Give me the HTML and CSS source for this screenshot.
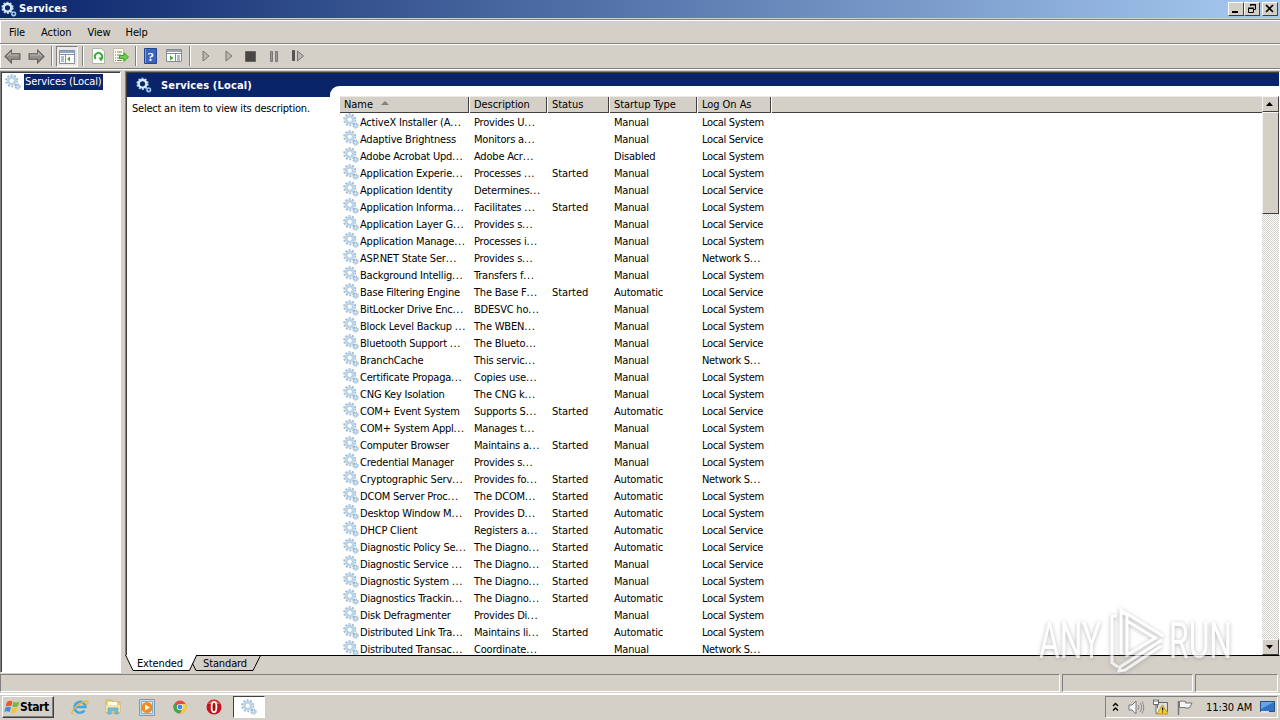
FILE: index.html
```html
<!DOCTYPE html>
<html lang="en">
<head>
<meta charset="utf-8">
<title>Services</title>
<link rel="stylesheet" href="styles.css">
</head>
<body>
<svg class="defs" aria-hidden="true">
  <symbol id="gear" viewBox="0 0 16 16">
    <circle cx="6.7" cy="6.7" r="5.6" fill="none" stroke="#9db8cf" stroke-width="1.8" stroke-dasharray="1.9 1.62"/>
    <circle cx="6.7" cy="6.7" r="3.9" fill="none" stroke="#bcd6ea" stroke-width="2.4"/>
    <circle cx="6.7" cy="6.7" r="2.6" fill="none" stroke="#94b4d0" stroke-width=".6"/>
    <circle cx="12.6" cy="12.6" r="2.5" fill="none" stroke="#8fb0cc" stroke-width="1.2" stroke-dasharray="1.2 .76"/>
    <circle cx="12.6" cy="12.6" r="1.6" fill="#d8e8f4" stroke="#a3c3dd" stroke-width="1"/>
  </symbol>
  <symbol id="gear-light" viewBox="0 0 16 16">
    <circle cx="6.5" cy="6.8" r="5.2" fill="none" stroke="#a9d0ee" stroke-width="1.8" stroke-dasharray="2 1.27"/>
    <circle cx="6.5" cy="6.8" r="3.8" fill="none" stroke="#d6ecfa" stroke-width="2.4"/>
    <circle cx="12.7" cy="12.8" r="1.8" fill="#0a246a" stroke="#9cc8ea" stroke-width="1.6"/>
  </symbol>
  <symbol id="arrow" viewBox="0 0 16 14">
    <path d="M1 7 7 1v3.5h8v5H7V13z" fill="#92908b" stroke="#5f5e5b"/>
    <path d="M3 6.7 6.2 3.5v2H14" fill="none" stroke="#bbb8b2"/>
  </symbol>
  <symbol id="play" viewBox="0 0 8 12">
    <path d="M1 1v10l6-5z" fill="#b9b6b0" stroke="#777"/>
  </symbol>
</svg>

<div class="screen">
  <header class="title">
    <svg class="ic16"><use href="#gear-light"/></svg><b>Services</b>
    <div class="winbtns">
      <span class="btn"><svg width="14" height="12"><path d="M3 8h6v2H3z"/></svg></span>
      <span class="btn"><svg width="14" height="12"><path d="M5.5 3V1.5h5v5H9M5 2h6M3.5 5.5h5v4h-5zM3 5h6" fill="none" stroke="#000"/></svg></span>
      <span class="btn gap"><svg width="14" height="12"><path d="M3 2l7 7M10 2l-7 7" stroke="#000" stroke-width="1.6"/></svg></span>
    </div>
  </header>

  <nav class="menu"><span>File</span><span>Action</span><span>View</span><span>Help</span></nav>

  <div class="toolbar">
    <svg class="t1" width="17" height="15"><use href="#arrow"/></svg>
    <svg class="t2" width="17" height="15"><use href="#arrow"/></svg>
    <i class="sep s1"></i>
    <span class="pressed"><svg width="17" height="15"><path d="M.5.5h15v13H.5z" fill="#fff" stroke="#8391a8"/><path d="M1 1h14v2H1z" fill="#8ba6c9"/><path d="M1 4.5h14M6.5 5v8" stroke="#8391a8"/><path d="M2 7h3M2 9h3M2 11h3" stroke="#537ab2"/><path d="M11 6.500v5L8 9z" fill="#3faa36"/></svg></span>
    <i class="sep s2"></i>
    <svg class="t3" width="14" height="16"><path d="M.5.5h9l3 3v12H.5z" fill="#fff" stroke="#a9b5a6"/><path d="M3.800 11A3.600 3.600 0 1 1 9.200 11" fill="none" stroke="#3da83a" stroke-width="1.900"/><path d="M6.500 9.500h5l-2.500 4z" fill="#3da83a"/></svg>
    <svg class="t4" width="17" height="16"><path d="M.5.5h10v14H.5z" fill="#fffef0" stroke="#c2bfa6"/><path d="M2 4h1M4 4h5M2 7h1M4 7h4M2 10h1M4 10h4M2 12.500h1M4 12.500h5" stroke="#777"/><path d="M6.500 7.500H11V4.800L15.500 9 11 13.200v-2.700H6.500z" fill="#6bd04b" stroke="#38a52c"/></svg>
    <i class="sep s3"></i>
    <svg class="t5" width="14" height="16"><path d="M.5.5h12v15H.5z" fill="#3c63bd" stroke="#27458f"/><path d="M1.500 1v14" stroke="#7c9be0"/><text x="3.500" y="13" class="q">?</text></svg>
    <svg class="t6" width="17" height="14"><path d="M.5.5h15v12H.5z" fill="#fff" stroke="#858a90"/><path d="M1 1h14v2H1z" fill="#9aa6b5"/><path d="M1 4.500h14M9.500 5v8" stroke="#858a90"/><path d="M11 7h3M11 9h3M11 11h3" stroke="#537ab2"/><path d="M4 6.500v5L7.500 9z" fill="#3faa36"/></svg>
    <i class="sep s4"></i>
    <svg class="t7" width="8" height="12"><use href="#play"/></svg>
    <svg class="t8" width="8" height="12"><use href="#play"/></svg>
    <svg class="t9" width="11" height="11"><path d="M.5.5h10v10H.5z" fill="#484744" stroke="#66645f"/></svg>
    <svg class="t10" width="9" height="11"><path d="M.5.5h2v10h-2zM5.500.5h2v10h-2z" fill="#999" stroke="#777"/></svg>
    <svg class="t11" width="13" height="12"><path d="M.5.5h2v10h-2z" fill="#555" stroke="#555"/><path d="M5.500 1v10l6-5z" fill="#b9b6b0" stroke="#777"/></svg>
  </div>

  <main class="panes">
    <aside class="tree"><svg class="ic16"><use href="#gear"/></svg><span class="sel">Services (Local)</span></aside>
    <section class="right">
      <div class="content">
        <div class="banner"><svg class="ic16"><use href="#gear-light"/></svg><b>Services (Local)</b></div>
        <div class="below">
          <p class="hint">Select an item to view its description.</p>
          <div class="listwrap">
            <div class="list">
              <div class="row head"><span>Name <i class="sort"></i></span><span>Description</span><span>Status</span><span>Startup Type</span><span>Log On As</span><span></span></div>
              <div id="rows"></div>
            </div>
            <div class="scroll">
              <span class="sbtn"><svg width="12" height="12"><path d="M2 8h7L5.500 4z"/></svg></span>
              <span class="thumb"></span>
              <span class="sbtn down"><svg width="12" height="12"><path d="M2 4h7L5.500 8z"/></svg></span>
            </div>
          </div>
        </div>
      </div>
      <div class="tabs">
        <svg width="140" height="17"><path d="M0 0h71.500L64 15.500H8z" fill="#fff"/><path d="M.5 0 8 15.500h56.500L71.500.5H140" fill="none" stroke="#000"/><path d="M67.500 8.500 71 15.500h57L135.500.5" fill="none" stroke="#000"/><text x="12" y="12" textLength="46">Extended</text><text x="78" y="12" textLength="44">Standard</text></svg>
      </div>
    </section>
  </main>

  <footer class="status"><span></span><span></span><span></span></footer>

  <div class="taskbar">
    <div class="start"><svg width="17" height="16"><path d="M3 3q3-2 5.500-.5L7.300 7.300Q5 6 1.700 7.500z" fill="#e8592b"/><path d="M9.500 2.800q3 1.500 6-.3L14 7.300q-3 1.500-5.700.3z" fill="#77b843"/><path d="M1.500 8.500q3-1.500 5.500-.2L5.700 13Q3 11.500.3 13z" fill="#3f8edb"/><path d="M8 8.700q3 1.300 5.700-.2L12.300 13q-3 1.700-5.600.4z" fill="#f8c331"/></svg><b>Start</b></div>
    <svg class="k1" width="18" height="17"><path d="M13.500 11.500A5.500 5.500 0 1 1 14.500 8H5" fill="none" stroke="#42a6df" stroke-width="2.600"/><path d="M2 14.500C-2 16 4 5 15.500 2c3-.5 1 3 0 4" fill="none" stroke="#e5b83c" stroke-width="1.300"/></svg>
    <svg class="k2" width="16" height="16"><path d="M1 3V1h6l1 2h7v11H1z" fill="#efd07a" stroke="#d8b25b"/><path d="M3 3h9v4H3z" fill="#fff"/><path d="M1 6h14v7H1z" fill="#f7e3a2"/><path d="M3 15V9h10v6h-3v-3H6v3z" fill="#70bedc" stroke="#589fc1" stroke-width=".6"/></svg>
    <svg class="k3" width="16" height="17"><path d="M.5.5h15v16H.5z" fill="#c4dcf2" stroke="#6e9dc6"/><path d="M2.500 2.500h11v12h-11z" fill="#e0eefb" stroke="#85add0"/><circle cx="8" cy="8.500" r="5.500" fill="#f18b1b"/><path d="M6 5.500v6L11 8.500z" fill="#fff"/></svg>
    <svg class="k4" width="14" height="14"><circle cx="7" cy="7" r="6.500" fill="#e9483a"/><path d="M7 7 1.200 3.800A6.500 6.500 0 0 0 6.500 13.500L9.500 8.500z" fill="#43a651"/><path d="M7 4h6a6.500 6.500 0 0 1-6 9.500L10 8z" fill="#f8cf32"/><circle cx="7" cy="7" r="3.100" fill="#fff"/><circle cx="7" cy="7" r="2.400" fill="#4489e8"/></svg>
    <svg class="k5" width="16" height="16"><circle cx="8" cy="8" r="7.500" fill="#c4151c"/><path d="M2 5a7 7 0 0 1 12 0z" fill="#e35c5c"/><ellipse cx="8" cy="8" rx="2.400" ry="5.200" fill="#a30e14" stroke="#fff" stroke-width="1.800"/></svg>
    <span class="active"><svg class="ic16"><use href="#gear"/></svg></span>
    <div class="tray">
      <svg class="y1" width="8" height="10"><path d="M1 4 3.500 1.500 6 4M1 8.500 3.500 6 6 8.500" fill="none" stroke="#000" stroke-width="1.400"/></svg>
      <svg class="y2" width="17" height="15"><path d="M1 5h3l4-4v13L4 10H1z" fill="#f5f5f5" stroke="#777"/><path d="M10 5q2 2.500 0 5M12 3q3.500 4.500 0 9M14 1.500q3.500 6 0 12" fill="none" stroke="#8b8985"/></svg>
      <svg class="y3" width="17" height="16"><path d="M5.500 3.500h10v9h-10z" fill="#dedede" stroke="#666"/><path d="M1.500.5v5h5v-5M4 6v8.500h4M3 0v3M5 0v3" fill="#fff" stroke="#666"/><path d="M10.500 6 16 15H5z" fill="#f8d22b" stroke="#c29614"/><path d="M10 8.500h1.200v3H10zM10 12.500h1.200v1H10z"/></svg>
      <svg class="y4" width="17" height="15"><path d="M1.500 1v14" stroke="#777" stroke-width="1.500"/><path d="M2.500 1.500q3-1 6 0v1.500h6.500l-2.500 5H8V7.500H2.500z" fill="#f6f6f6" stroke="#777"/></svg>
      <span class="clock">11:30 AM</span>
      <svg class="y5" width="16" height="14"><path d="M.5 1.500h14v10H.5z" fill="#3173c7" stroke="#285083"/><path d="M1 2h13L1 9z" fill="#67a4e6"/><path d="M1 11h8v2H1z" fill="#d6e3ef"/></svg>
    </div>
  </div>

  <svg class="watermark" width="220" height="72">
    <g class="wm">
      <text x="2" y="54" textLength="62" lengthAdjust="spacingAndGlyphs">ANY</text>
      <text x="132" y="54" textLength="63" lengthAdjust="spacingAndGlyphs">RUN</text>
      <path d="M80 12h-5v47l6 4M84 50V6l42 26M84 8l6 3v40l30-18M125 36 83 63l-1 4 6-1 36-24M90 17l28 17" fill="none"/>
    </g>
  </svg>
</div>
<script src="script.js"></script>
</body>
</html>
```
FILE: script.js
```js
// name | description | started | startup type | log on account
const services = `ActiveX Installer (A...|Provides U...||M|S
Adaptive Brightness|Monitors a...||M|L
Adobe Acrobat Upd...|Adobe Acr...||D|S
Application Experie...|Processes ...|1|M|S
Application Identity|Determines...||M|L
Application Informa...|Facilitates ...|1|M|S
Application Layer G...|Provides s...||M|L
Application Manage...|Processes i...||M|S
ASP.NET State Ser...|Provides s...||M|N
Background Intellig...|Transfers f...||M|S
Base Filtering Engine|The Base F...|1|A|L
BitLocker Drive Enc...|BDESVC ho...||M|S
Block Level Backup ...|The WBEN...||M|S
Bluetooth Support ...|The Blueto...||M|L
BranchCache|This servic...||M|N
Certificate Propaga...|Copies use...||M|S
CNG Key Isolation|The CNG k...||M|S
COM+ Event System|Supports S...|1|A|L
COM+ System Appl...|Manages t...||M|S
Computer Browser|Maintains a...|1|M|S
Credential Manager|Provides s...||M|S
Cryptographic Serv...|Provides fo...|1|A|N
DCOM Server Proc...|The DCOM...|1|A|S
Desktop Window M...|Provides D...|1|A|S
DHCP Client|Registers a...|1|A|L
Diagnostic Policy Se...|The Diagno...|1|A|L
Diagnostic Service ...|The Diagno...|1|M|L
Diagnostic System ...|The Diagno...|1|M|S
Diagnostics Trackin...|The Diagno...|1|A|S
Disk Defragmenter|Provides Di...||M|S
Distributed Link Tra...|Maintains li...|1|A|S
Distributed Transac...|Coordinate...||M|N`;
const startup = { M: 'Manual', A: 'Automatic', D: 'Disabled' };
const account = { S: 'Local System', L: 'Local Service', N: 'Network S...' };
const cell = (text, cls = '') =>
  `<span class="${cls}">${text.replace('...', '<span class="dots">...</span>')}</span>`;

document.getElementById('rows').innerHTML = services.split('\n').map(line => {
  const [name, desc, started, type, logon] = line.split('|');
  return '<div class="row"><svg><use href="#gear"/></svg>' + cell(name) + cell(desc) +
    cell(started ? 'Started' : '', 'state') + cell(startup[type]) + cell(account[logon], 'logon') + '</div>';
}).join('');
```
FILE: styles.css
```css
* { box-sizing: border-box; }
body { margin: 0; background: #d4d0c8; overflow: hidden; }
.defs { position: absolute; width: 0; height: 0; }
.screen {
  position: relative; width: 1280px; height: 720px; display: flex; flex-direction: column;
  font: 11px/17px "DejaVu Sans Condensed", "DejaVu Sans", sans-serif; font-stretch: condensed;
  letter-spacing: -.1px; color: #000; overflow: hidden; white-space: nowrap;
}
svg { display: block; flex: none; }
b { font-family: "DejaVu Sans Condensed", "DejaVu Sans", sans-serif; font-size: 11px; letter-spacing: .15px; }
.ic16 { width: 16px; height: 16px; }

.title { height: 18px; display: flex; align-items: center; gap: 2px; padding: 0 2px 1px 1px; color: #fff; background: linear-gradient(90deg, #0a246a, #a6caf0); }
.winbtns { margin-left: auto; display: flex; }
.btn { width: 16px; height: 14px; background: #d4d0c8; border: 1px solid; border-color: #fff #404040 #404040 #fff; }
.btn.gap { margin-left: 2px; }

.menu { height: 25px; margin-top: 1px; border-top: 1px solid #808080; box-shadow: inset 0 1px #fff, inset 1px 0 #fff; display: flex; gap: 16px; padding: 4px 9px 0; border-bottom: 1px solid #808080; }
.menu span:last-child { margin-left: -1px; }
.toolbar { height: 25px; display: flex; align-items: center; padding: 0 0 1px 5px; border-top: 1px solid #fff; border-bottom: 1px solid #808080; box-shadow: 0 1px #fff, inset 1px 0 #fff; }
.sep { width: 2px; height: 20px; border-left: 1px solid #808080; border-right: 1px solid #fff; }
.t1 { margin-left: -1px; }
.t2 { transform: scaleX(-1); margin-left: 7px; }
.s1 { margin-left: 6px; }
.pressed { width: 22px; height: 21px; margin-left: 3px; padding: 3px 2px; border: 1px solid; border-color: #808080 #fff #fff #808080; background: #eae8e4; }
.s2 { margin-left: 4px; }
.t3 { margin-left: 8px; }
.t4 { margin-left: 7px; }
.s3 { margin-left: 5px; }
.t5 { margin-left: 7px; }
.t6 { margin-left: 8px; }
.s4 { margin-left: 6px; }
.t7 { margin-left: 11px; }
.t8 { margin-left: 15px; }
.t9 { margin-left: 12px; }
.t10 { margin-left: 14px; }
.t11 { margin-left: 13px; }
.q { font: bold 13px "Liberation Serif", serif; fill: #fff; }

.panes { height: 602px; margin-top: 2px; display: flex; gap: 4px; }
.tree { width: 121px; border: 1px solid; border-color: #808080 #fff #fff #808080; box-shadow: inset 1px 1px #404040; background: #fff; padding: 2px 0 0 4px; display: flex; align-items: flex-start; gap: 3px; }
.sel { background: #0a246a; color: #fff; height: 16px; line-height: 16px; width: 79px; padding-left: 1px; letter-spacing: -.1px; }
.right { flex: 1; display: flex; flex-direction: column; }
.content { height: 585px; border: 1px solid; border-color: #808080 #fff #000 #808080; box-shadow: inset 1px 1px #404040; padding: 1px 0 0 1px; background: #fff; display: flex; flex-direction: column; }
.banner { height: 24px; flex: none; background: #0a246a; color: #fff; display: flex; align-items: center; gap: 9px; padding-left: 9px; }
.below { flex: 1; min-height: 0; display: flex; }
.hint { margin: 3px 0 0 5px; width: 198px; letter-spacing: -.23px; }
.listwrap { flex: 1; margin-top: -11px; padding: 10px 0 0 9px; background: #fff; border-top-left-radius: 9px; display: flex; height: 569px; overflow: hidden; }
.list { flex: 1; overflow: hidden; letter-spacing: -.2px; }
.row { display: grid; grid-template-columns: 17px 114px 78px 62px 88px 76px; padding-left: 4px; height: 17px; }
.row svg { width: 16px; height: 16px; margin-top: -1px; }
.dots { letter-spacing: .6px; }
.state { letter-spacing: -.05px; }
.logon { letter-spacing: -.33px; }
.row.head { grid-template-columns: 130px 78px 62px 88px 74px 1fr; padding: 0; height: 17px; margin-bottom: 1px; background: #d4d0c8; border-top: 1px solid #eceae6; border-bottom: 1px solid #404040; line-height: 16px; letter-spacing: -.05px; }
.head span { padding-left: 5px; border-right: 1px solid #404040; box-shadow: inset 1px 0 #fff; }
.head span:last-child { border: 0; }
.sort { display: inline-block; margin: 0 0 3px 5px; border: 4px solid transparent; border-top: 0; border-bottom: 4px solid #808080; }
.scroll { width: 17px; display: flex; flex-direction: column; background: repeating-conic-gradient(#fff 0 25%, #d4d0c8 0 50%) 0 0/2px 2px; }
.sbtn, .thumb { background: #d4d0c8; border: 1px solid; border-color: #f5f4f2 #404040 #404040 #f5f4f2; }
.sbtn { height: 16px; padding: 1px; }
.thumb { height: 102px; }
.down { margin-top: auto; }
.tabs { height: 17px; margin-top: -1px; }

.status { height: 20px; margin-top: 1px; border-bottom: 1px solid #fff; display: grid; grid-template-columns: 1060px 131px 83px; gap: 2px; padding-bottom: 1px; }
.status span { border: 1px solid; border-color: #808080 #fff #fff #808080; }

.taskbar { flex: 1; box-shadow: inset 0 1px #fff; display: flex; align-items: center; padding-left: 2px; }
.start { width: 52px; height: 22px; display: flex; align-items: center; padding-left: 1px; border: 1px solid; border-color: #fff #404040 #404040 #fff; box-shadow: inset -1px -1px #808080; }
.start b { font-size: 12px; letter-spacing: -.4px; margin-left: -1px; }
.k1 { margin-left: 17px; }
.k2 { margin-left: 16px; }
.k3 { margin-left: 18px; }
.k4 { margin-left: 18px; }
.k5 { margin-left: 19px; }
.active { width: 32px; height: 22px; margin-left: 11px; padding: 2px 7px; background: #fff; border: 1px solid; border-color: #404040 #fff #fff #404040; }
.tray { margin-left: auto; margin-right: 2px; width: 173px; height: 22px; border: 1px solid; border-color: #808080 #fff #fff #808080; display: flex; align-items: center; padding-left: 6px; }
.y2 { margin-left: 8px; }
.y3 { margin-left: 7px; }
.y4 { margin-left: 8px; }
.clock { margin-left: 12px; width: 47px; letter-spacing: -.1px; }
.y5 { margin-left: 7px; }

.watermark { position: absolute; left: 1037px; top: 604px; }
.wm { fill: #fff; stroke: #fff; stroke-width: 3; filter: drop-shadow(0 1px 2px #999); opacity: .72; }
.wm text { font: 400 50px Roboto, sans-serif; stroke-width: 0; letter-spacing: 0; }
```
